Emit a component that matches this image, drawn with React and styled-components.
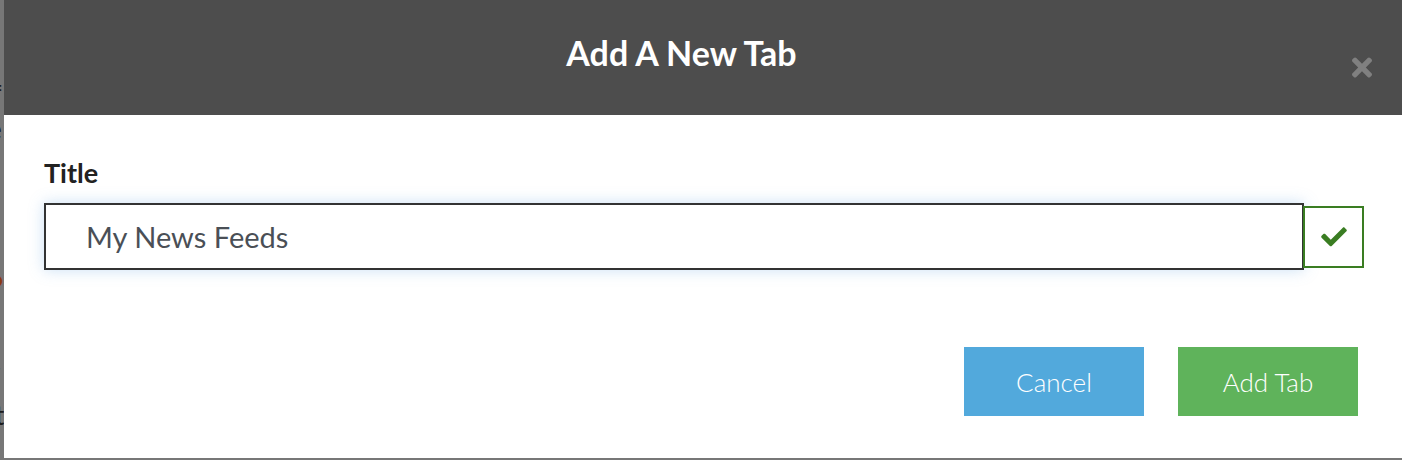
import React from 'react';
import styled, {createGlobalStyle} from 'styled-components';

const GlobalStyle = createGlobalStyle`
  html, body {
    margin: 0;
    padding: 0;
    background: #777777;
    font-family: Lato, "Open Sans", sans-serif;
  }
`;

const Page = styled.div`
  display: flex;
  width: 1402px;
  height: 460px;
  overflow: hidden;
`;

// sliver of the page behind the overlay
const Backdrop = styled.div`
  width: 4px;
  flex: none;
  overflow: hidden;
  background: #777777;
  color: #1c1c1c;
  font-size: 26px;
  line-height: 30px;
  padding-top: 72px;
  white-space: nowrap;
`;

const Frag = styled.div`
  margin-left: ${props => props.shift || -12}px;
  height: ${props => props.h || 30}px;
  color: ${props => props.color || '#1c1c1c'};
`;

const Dialog = styled.div`
  flex: 1;
  height: 458px;
  background: #ffffff;
  display: flex;
  flex-direction: column;
`;

const Header = styled.div`
  height: 115px;
  background: #4d4d4d;
  display: flex;
  align-items: flex-start;
  padding: 0 30px 0 7px;
  box-sizing: border-box;
`;

const HeaderTitle = styled.h2`
  flex: 1;
  margin: 0;
  padding-top: 34px;
  text-align: center;
  color: #ffffff;
  font-size: 34px;
  font-weight: 700;
  line-height: 38px;
`;

const Close = styled.button`
  width: 20px;
  margin-top: 57px;
  padding: 0;
  border: none;
  background: none;
  display: flex;
  cursor: pointer;
`;

const Body = styled.div`
  padding: 42px 38px 0 40px;
  display: flex;
  flex-direction: column;
`;

const Label = styled.label`
  font-size: 27px;
  font-weight: 700;
  color: #222222;
  line-height: 32px;
  margin-bottom: 14px;
`;

const InputRow = styled.div`
  display: flex;
  align-items: center;
`;

const Input = styled.input`
  width: 1260px;
  height: 67px;
  box-sizing: border-box;
  border: 2px solid #333333;
  border-radius: 0;
  padding: 0 0 0 40px;
  font-family: Lato, "Open Sans", sans-serif;
  font-size: 29px;
  color: #4a4f56;
  outline: none;
  box-shadow: 0 0 14px rgba(102, 165, 225, 0.35);
`;

const Addon = styled.span`
  width: 61px;
  height: 62px;
  margin-left: -1px;
  box-sizing: border-box;
  border: 2px solid #3a7d22;
  display: flex;
  align-items: center;
  justify-content: center;
  background: #ffffff;
`;

const Actions = styled.div`
  display: flex;
  justify-content: flex-end;
  gap: 34px;
  padding: 77px 44px 0 0;
`;

const Button = styled.button`
  width: 180px;
  height: 69px;
  border: none;
  border-radius: 0;
  background: ${props => props.bg};
  color: #ffffff;
  font-family: Lato, "Open Sans", sans-serif;
  font-size: 26px;
  font-weight: 300;
  cursor: pointer;
`;

const CheckIcon = () => (
    <svg width="26" height="21" viewBox="0 40 512 420" fill="#3a7d22">
        <path d="M173.898 439.404l-166.4-166.4c-9.997-9.997-9.997-26.206 0-36.204l36.203-36.204c9.997-9.998 26.207-9.998 36.204 0L192 312.69 432.095 72.596c9.997-9.997 26.207-9.997 36.204 0l36.203 36.204c9.997 9.997 9.997 26.206 0 36.204l-294.4 294.401c-9.998 9.997-26.207 9.997-36.204-.001z"/>
    </svg>
);

const TimesIcon = () => (
    <svg width="20" height="21" viewBox="0 80 352 352" fill="#808080">
        <path d="M242.72 256l100.07-100.07c12.28-12.28 12.28-32.19 0-44.480l-22.24-22.24c-12.28-12.28-32.19-12.28-44.48 0L176 189.28 75.93 89.21c-12.28-12.28-32.19-12.28-44.48 0L9.21 111.45c-12.28 12.28-12.28 32.19 0 44.48L109.28 256 9.21 356.07c-12.28 12.28-12.28 32.19 0 44.48l22.24 22.24c12.28 12.28 32.2 12.28 44.48 0L176 322.72l100.07 100.07c12.28 12.28 32.2 12.28 44.48 0l22.24-22.24c12.28-12.28 12.28-32.19 0-44.48L242.72 256z"/>
    </svg>
);

export default function App() {
    return (
        <Page>
            <GlobalStyle/>
            <Backdrop>
                <Frag h={42}>=</Frag>
                <Frag h={150}>e</Frag>
                <Frag h={60} color="#8a3a12">●</Frag>
                <Frag h={38}>a</Frag>
                <Frag h={38} shift={-5}>i</Frag>
                <Frag shift={-5}>t</Frag>
            </Backdrop>
            <Dialog>
                <Header>
                    <HeaderTitle>Add A New Tab</HeaderTitle>
                    <Close aria-label="Close"><TimesIcon/></Close>
                </Header>
                <Body>
                    <Label htmlFor="tab-title">Title</Label>
                    <InputRow>
                        <Input id="tab-title" defaultValue="My News Feeds"/>
                        <Addon><CheckIcon/></Addon>
                    </InputRow>
                </Body>
                <Actions>
                    <Button bg="#52a9dc">Cancel</Button>
                    <Button bg="#5fb35b">Add Tab</Button>
                </Actions>
            </Dialog>
        </Page>
    );
}
